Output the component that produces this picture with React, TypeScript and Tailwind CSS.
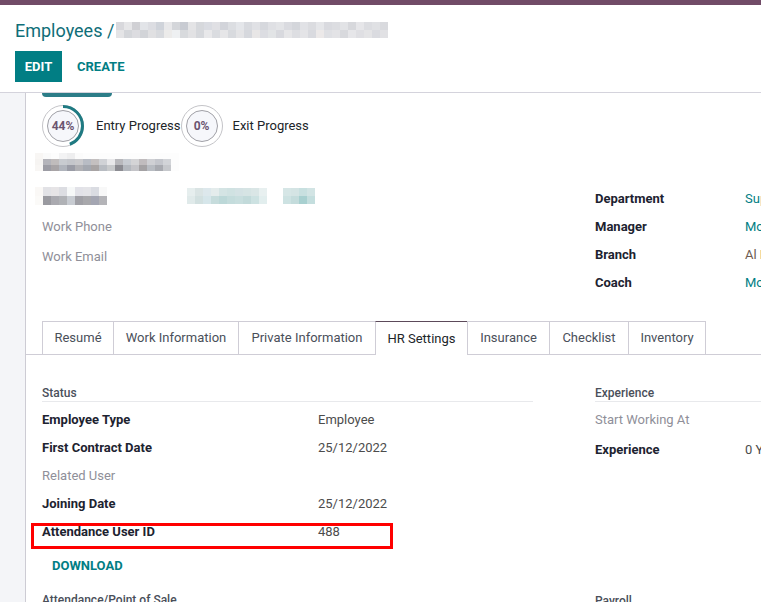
import React from "react"

type Rows = string[][]

function Pixels({ rows, w = 8, h = 8 }: { rows: Rows; w?: number; h?: number }) {
  return (
    <div className="flex flex-col">
      {rows.map((row, i) => (
        <div key={i} className="flex">
          {row.map((c, j) => (
            <div key={j} style={{ width: w, height: h, background: c }} />
          ))}
        </div>
      ))}
    </div>
  )
}

const crumbBlur: Rows = [
  ["#d8d8dc", "#e6e6e8", "#d0d0d4", "#e2e4e8", "#dcdde2", "#cfd3da", "#e8e8ea", "#d4d6da", "#c8cbd2", "#e4e4e6", "#d6d8dc", "#dadce2", "#e0e0e4", "#d2d4da", "#dcdee2", "#e4e6ea", "#d8dadf", "#e0e1e5", "#d6d8dd", "#dfe0e4", "#e3e4e7", "#dadbe0", "#d4d6db", "#e1e2e6", "#dbdce0", "#e5e6e9", "#d9dadf", "#dcdde1", "#e2e3e6", "#d7d8dc", "#e6e6e9", "#dcdde1", "#e0e1e4", "#d9dade"],
  ["#e4e4e6", "#d4d6da", "#dcdce0", "#d2d4d8", "#e0e0e2", "#d8dade", "#ecebea", "#eef0f2", "#d8dadd", "#e2e2e4", "#d6d8dc", "#e8e8ea", "#dadce0", "#e6e6e8", "#d8dade", "#e4e4e6", "#d6d8dd", "#e8e6e6", "#dcdde2", "#e2e4e6", "#d8d9de", "#e6e6e8", "#dddee2", "#e4e4e7", "#d9dadf", "#ece9e9", "#dfe0e4", "#e3e3e6", "#d8d9dd", "#e6e6e9", "#dfdfe3", "#e4e4e6", "#dadbe0", "#e1e1e4"],
]

const nameBlur: Rows = [
  ["#f8f6f4", "#fafafa", "#fdfdfd", "#f3f3f4", "#eeeeef", "#fbfbfb", "#fdfdfd", "#fdfdfd", "#fdfdfd", "#fdfdfd", "#fdfdfd", "#fdfdfd", "#fdfdfd", "#fdfdfd", "#fdfdfd", "#fdfdfd", "#fdfdfd", "#fdfdfd"],
  ["#f6f4f2", "#b4b4ba", "#c0bcbc", "#c8cbd0", "#c4c6cb", "#c9c9cc", "#b8bcc4", "#c4c0c0", "#d0d2d6", "#e8e8ea", "#b8b8bc", "#c8ccd2", "#d4d4d6", "#c0bcbe", "#cfd0d4", "#c4c6cc", "#d2d4d8", "#fdfdfd"],
  ["#f8f6f4", "#9c9ca4", "#a8a4a6", "#b0b4bc", "#9a9ca6", "#b0b0b4", "#a4a8b0", "#a8a4a4", "#b8bcc2", "#c8cacc", "#8c8c92", "#b4b8be", "#c4c4c8", "#a4a2a4", "#b8bcc2", "#a8aab0", "#c6c8cc", "#fdfdfd"],
]

const infoBlurA: Rows = [
  ["#faf8f6", "#e2e2e6", "#e6e4e6", "#dcdde2", "#f6f8f8", "#e2e2e8", "#e4e4e8", "#dadce2", "#f8f8f8", "#ffffff"],
  ["#fbfaf8", "#9a9aa0", "#aaaab0", "#b0b2b6", "#c8ccd2", "#a0a0a6", "#a8a8ac", "#a4a6b2", "#b4b4b8", "#ffffff"],
]

const infoBlurB: Rows = [
  ["#e6eeee", "#dae4e4", "#dde8ec", "#e4ecec", "#d4e4e4", "#d0e2e2", "#d4e2e4", "#d6e4e4", "#dae6e6", "#e8f0f0", "#ffffff"],
  ["#e0eaea", "#d2e0e0", "#d6e6ea", "#c6dcdc", "#bcd8d8", "#c4dcdc", "#c8dede", "#c2dada", "#cde2e2", "#e2eeee", "#ffffff"],
]

const infoBlurC: Rows = [
  ["#d6e6e6", "#d4e4e4", "#c8e0e0", "#d2e4e4"],
  ["#cde2e2", "#c4dcdc", "#a8d0d0", "#c4dede"],
]

function Progress({ value, pct }: { value: string; pct: number }) {
  const r = 19.5
  const c = 2 * Math.PI * r
  return (
    <div className="relative w-[42px] h-[42px] shrink-0">
      <svg width="42" height="42" viewBox="0 0 42 42" className="absolute inset-0">
        <circle cx="21" cy="21" r="20.5" fill="#fff" stroke="#c4c4c8" strokeWidth="1" />
        <circle cx="21" cy="21" r="15.5" fill="#f6f7fb" stroke="#a0a0a6" strokeWidth="1" />
        {pct > 0 && (
          <circle
            cx="21"
            cy="21"
            r={r}
            fill="none"
            stroke="#1f7a82"
            strokeWidth="3"
            strokeDasharray={`${(c * pct) / 100} ${c}`}
            transform="rotate(-90 21 21)"
          />
        )}
      </svg>
      <div className="absolute inset-0 flex items-center justify-center text-[12px] font-bold text-[#6b5470]">
        {value}
      </div>
    </div>
  )
}

function Field({
  label,
  value,
  muted,
  valueClass = "text-[#4c4c4c]",
  labelWidth,
  h = "h-[28px]",
}: {
  label: string
  value?: string
  muted?: boolean
  valueClass?: string
  labelWidth: string
  h?: string
}) {
  return (
    <div className={`flex items-center ${h} whitespace-nowrap`}>
      <div
        className={`${labelWidth} shrink-0 ${
          muted ? "text-[#8f8f99]" : "font-bold text-[#1d2330]"
        }`}
      >
        {label}
      </div>
      {value && <div className={valueClass}>{value}</div>}
    </div>
  )
}

const tabs = [
  { name: "Resumé", w: "w-[71px]" },
  { name: "Work Information", w: "w-[125px]" },
  { name: "Private Information", w: "w-[137px]" },
  { name: "HR Settings", w: "w-[92px]", active: true },
  { name: "Insurance", w: "w-[82px]" },
  { name: "Checklist", w: "w-[79px]" },
  { name: "Inventory", w: "w-[78px]" },
]

export default function App() {
  return (
    <div className="h-[602px] w-[761px] overflow-hidden bg-white text-[13px] text-[#212529] font-['Roboto','Liberation_Sans',sans-serif]">
      <div className="h-[5px] bg-[#714b67]" />

      {/* control panel */}
      <div className="px-[15px] pt-[13px] pb-[10px] border-b border-[#d4d3dc]">
        <div className="flex items-center h-[24px]">
          <span className="text-[18px] text-[#0f6e78]">Employees /</span>
          <div className="ml-[2px] mt-[-1px]">
            <Pixels rows={crumbBlur} />
          </div>
        </div>
        <div className="flex items-center gap-[15px] mt-[9px]">
          <button className="h-[31px] w-[47px] bg-[#017e84] text-white font-bold text-[13px]">
            EDIT
          </button>
          <button className="h-[31px] font-bold text-[13px] text-[#017e84]">CREATE</button>
        </div>
      </div>

      <div className="flex h-full">
        <div className="w-[26px] shrink-0 bg-[#f4f5f8] border-r border-[#cdccd4]" />

        {/* form sheet */}
        <div className="flex-1 pl-[16px] overflow-hidden">
          <div className="h-[4px] w-[70px] bg-[#2c7d88] rounded-b-[8px]" />

          <div className="flex items-center mt-[8px]">
            <Progress value="44%" pct={44} />
            <span className="ml-[12px] text-[#212529]">Entry Progress</span>
            <Progress value="0%" pct={0} />
            <span className="ml-[10px] text-[#212529]">Exit Progress</span>
          </div>

          <div className="mt-[6px] ml-[-7px]">
            <Pixels rows={nameBlur} w={8} h={6} />
          </div>

          <div className="flex mt-[10px]">
            <div className="w-[553px] shrink-0">
              <div className="flex items-center h-[30px] ml-[-7px]">
                <Pixels rows={infoBlurA} w={8} h={9} />
                <div className="ml-[72px]">
                  <Pixels rows={infoBlurB} />
                </div>
                <div className="ml-[8px]">
                  <Pixels rows={infoBlurC} />
                </div>
              </div>
              <div className="mt-[1px]">
                <Field label="Work Phone" muted labelWidth="w-[276px]" h="h-[30px]" />
                <Field label="Work Email" muted labelWidth="w-[276px]" h="h-[30px]" />
              </div>
            </div>
            <div className="mt-[4px] w-[300px] shrink-0">
              <Field label="Department" value="Support" valueClass="text-[#017e84]" labelWidth="w-[150px]" />
              <Field label="Manager" value="Mohammed" valueClass="text-[#017e84]" labelWidth="w-[150px]" />
              <Field label="Branch" value="Al Riyadh" valueClass="text-[#6e5c52]" labelWidth="w-[150px]" />
              <Field label="Coach" value="Mohammed" valueClass="text-[#017e84]" labelWidth="w-[150px]" />
            </div>
          </div>

          {/* tabs */}
          <div className="flex mt-[24px] ml-[-16px] pl-[16px] border-b border-[#cfcdd6] w-[900px]">
            {tabs.map((t, i) => (
              <div
                key={t.name}
                className={`${t.w} shrink-0 flex items-center justify-center border-l border-t ${
                  i === tabs.length - 1 ? "border-r" : ""
                } ${
                  t.active
                    ? "bg-white border-t-[#5c4a5a] border-l-[#cfcdd6] mb-[-1px] h-[34px] text-[#212529]"
                    : "h-[33px] border-[#cfcdd6] text-[#4a4f5a]"
                }`}
              >
                {t.name}
              </div>
            ))}
          </div>

          {/* HR settings */}
          <div className="flex mt-[30px]">
            <div className="w-[491px] shrink-0">
              <div className="h-[17px] border-b border-[#e8e9ec] text-[12px] font-medium text-[#4a4f5a] leading-[16px]">
                Status
              </div>
              <div className="mt-[4px]">
                <Field label="Employee Type" value="Employee" labelWidth="w-[276px]" />
                <Field label="First Contract Date" value="25/12/2022" labelWidth="w-[276px]" />
                <Field label="Related User" muted labelWidth="w-[276px]" />
                <Field label="Joining Date" value="25/12/2022" labelWidth="w-[276px]" />
                <div className="relative">
                  <Field label="Attendance User ID" value="488" labelWidth="w-[276px]" />
                  <div className="absolute left-[-11px] top-[5px] w-[362px] h-[26px] border-[3px] border-[#ff0000]" />
                </div>
              </div>
              <button className="mt-[6px] ml-[10px] h-[28px] font-bold text-[#017e84]">
                DOWNLOAD
              </button>
              <div className="mt-[12px] h-[17px] text-[12px] font-medium text-[#4a4f5a] leading-[16px]">
                Attendance/Point of Sale
              </div>
            </div>
            <div className="ml-[62px] w-[300px] shrink-0">
              <div className="h-[17px] border-b border-[#e8e9ec] text-[12px] font-medium text-[#4a4f5a] leading-[16px]">
                Experience
              </div>
              <div className="mt-[4px]">
                <Field label="Start Working At" muted labelWidth="w-[150px]" />
                <Field label="Experience" value="0 Years" labelWidth="w-[150px]" h="h-[32px]" />
              </div>
              <div className="mt-[127px] h-[17px] text-[12px] font-medium text-[#4a4f5a] leading-[16px]">
                Payroll
              </div>
            </div>
          </div>
        </div>
      </div>
    </div>
  )
}
